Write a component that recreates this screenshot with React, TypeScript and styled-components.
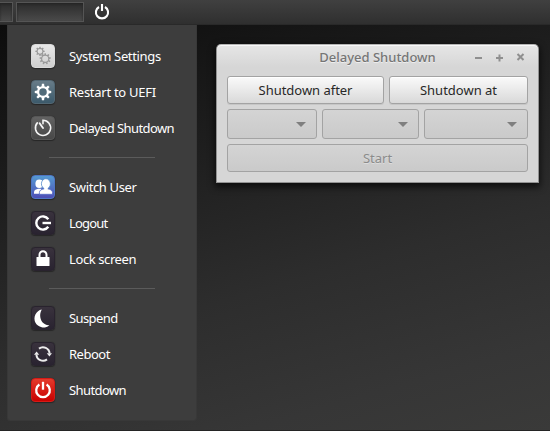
import React from "react";
import styled, { createGlobalStyle } from "styled-components";

const GlobalStyle = createGlobalStyle`
  * { box-sizing: border-box; }
  body { margin: 0; overflow: hidden; background: #222; }
`;

const Desktop = styled.div`
  position: relative;
  width: 550px;
  height: 431px;
  overflow: hidden;
  display: flex;
  flex-direction: column;
  font-family: "Noto Sans", "Open Sans", sans-serif;
  font-size: 13px;
  background: linear-gradient(164deg, #0c0c0c 4%, #161616 20%, #222 42%, #2d2d2d 62%, #363636 85%, #3a3a39 100%);
  box-shadow: inset 0 -1px #242424;
`;

const TaskBar = styled.header`
  height: 25px;
  flex: none;
  display: flex;
  align-items: flex-start;
  padding-top: 2px;
  background: linear-gradient(#404040, #2f2f2f);
  border-bottom: 1px solid #292929;
`;

const TaskSlot = styled.div<{ $width: number; $open?: boolean }>`
  width: ${(p) => p.$width}px;
  height: 20px;
  margin-right: 3px;
  border: 1px solid #555;
  ${(p) => (p.$open ? "border-left: 0;" : "")}
  background: linear-gradient(#2b2b2b, #4a4a4a);
  box-shadow: inset 0 1px 2px #242424;
`;

const TrayIcon = styled.svg`
  display: block;
  margin: 1px 0 0 6px;
`;

const Workspace = styled.main`
  display: flex;
  align-items: flex-start;
  padding-left: 7px;
`;

const Menu = styled.nav`
  width: 190px;
  height: 396px;
  flex: none;
  padding: 13px 0 0 24px;
  background: #3d3d3d;
  border: solid #383838;
  border-width: 0 1px 1px 1px;
  border-radius: 0 0 3px 3px;
`;

const MenuRow = styled.div`
  height: 36px;
  margin-left: -1px;
  display: flex;
  align-items: center;
  gap: 14px;
`;

const Divider = styled.hr`
  width: 106px;
  height: 1px;
  margin: 11px 0 11px 17px;
  border: 0;
  background: #5b5b5b;
`;

const Tile = styled.span<{ $fill: string; $edge: string }>`
  width: 24px;
  height: 24px;
  flex: none;
  border-radius: 4px;
  border: 1px solid ${(p) => p.$edge};
  background: ${(p) => p.$fill};
  box-shadow: 0 0 1px 0 #222, 0 1px 1px rgba(0, 0, 0, 0.35);
  svg { display: block; margin: -1px; }
`;

const Label = styled.span<{ $width: number; $spacing: number }>`
  width: ${(p) => p.$width}px;
  line-height: 18px;
  white-space: nowrap;
  letter-spacing: ${(p) => p.$spacing}px;
  color: #fff;
`;

const Window = styled.section`
  width: 323px;
  height: 139px;
  margin: 19px 0 0 19px;
  padding: 0 10px;
  display: flex;
  flex-direction: column;
  gap: 5px;
  border: 1px solid #929292;
  border-top-color: #b4b4b4;
  border-radius: 5px 5px 0 0;
  background: linear-gradient(#e6e6e6, #d6d6d6 22px);
  box-shadow: inset 0 1px #f8f8f8, 0 3px 7px 1px rgba(0, 0, 0, 0.65);
`;

const TitleBar = styled.div`
  height: 26px;
  display: grid;
  grid-template-columns: 1fr auto;
  align-items: center;
`;

const Title = styled.h1<{ $spacing: number }>`
  margin: 0 0 3px 64px;
  text-align: center;
  font-size: 13px;
  font-weight: 500;
  line-height: 18px;
  letter-spacing: ${(p) => p.$spacing}px;
  color: #757575;
  text-shadow: 0 1px #eee;
`;

const Controls = styled.svg`
  display: block;
  margin-bottom: 2px;
`;

const ButtonRow = styled.div<{ $columns: string }>`
  display: grid;
  grid-template-columns: ${(p) => p.$columns};
  gap: 5px;
`;

const Button = styled.button<{ $spacing: number }>`
  height: 28px;
  padding: 0;
  border: 1px solid #a3a3a3;
  border-radius: 3px;
  background: linear-gradient(#fafafa, #d9d9d9);
  box-shadow: inset 0 1px #fff, 0 1px #c6c6c6;
  font: inherit;
  line-height: 18px;
  letter-spacing: ${(p) => p.$spacing}px;
  color: #282828;
  &:disabled {
    color: #8b8b8b;
    background: linear-gradient(#d4d4d4, #cacaca);
    box-shadow: none;
    text-shadow: 0 1px #ddd;
  }
`;

const Combo = styled.div`
  height: 30px;
  display: flex;
  align-items: center;
  justify-content: flex-end;
  padding-right: 10px;
  border: 1px solid #a3a3a3;
  border-radius: 3px;
  background: linear-gradient(#d4d4d4, #cacaca);
`;

const Arrow = styled.span`
  border: 5px solid transparent;
  border-top-color: #7f7f7f;
  border-bottom: 0;
`;

const gearPath = (cx: number, cy: number, outer: number, inner: number, teeth = 8) => {
  const step = (Math.PI * 2) / teeth;
  const points: string[] = [];
  for (let i = 0; i < teeth; i++) {
    const mid = i * step - Math.PI / 2;
    const corners: [number, number][] = [
      [-0.3, inner],
      [-0.17, outer],
      [0.17, outer],
      [0.3, inner],
    ];
    corners.forEach(([offset, r]) => {
      const a = mid + offset * step;
      points.push(`${(cx + r * Math.cos(a)).toFixed(2)} ${(cy + r * Math.sin(a)).toFixed(2)}`);
    });
  }
  return `M${points.join("L")}Z`;
};

const glyphs: Record<string, React.ReactNode> = {
  settings: (
    <g fill="#999" fillRule="evenodd">
      <path d={`${gearPath(9, 7.3, 4.7, 3.5, 8)}M11.4 7.3a2.4 2.4 0 1 0-4.8 0a2.4 2.4 0 1 0 4.8 0Z`} />
      <path d={`${gearPath(14.2, 14.8, 5.7, 4.2, 9)}M17.2 14.8a3 3 0 1 0-6 0a3 3 0 1 0 6 0Z`} />
    </g>
  ),
  gear: (
    <>
      <path d={gearPath(12, 12, 8.3, 6)} fill="#fff" />
      <circle cx="12" cy="12" r="3.8" fill="#526c7a" />
    </>
  ),
  timer: (
    <g fill="none" stroke="#f4f4f4" strokeLinecap="round">
      <path d="M12 7.8V4.3A7.6 7.6 0 1 1 6.3 6.9" strokeWidth="1.6" />
      <path d="M8.6 7.3L12 12" strokeWidth="1.9" />
    </g>
  ),
  users: (
    <g fill="#fff">
      <ellipse cx="8.3" cy="8.8" rx="3.9" ry="4.3" />
      <path d="M3 18.8v-1.6c0-2.1 2.4-2.9 4.1-3.4h3.2v5z" />
      <path d="M8.4 19.3v-1.7c0-2.4 2-3.2 4.8-3.8h3.5c2.8.6 4.8 1.4 4.8 3.8v1.7z" stroke="#5267c5" strokeWidth=".8" />
      <ellipse cx="14.9" cy="8.8" rx="4.5" ry="5.1" stroke="#528aca" strokeWidth=".8" />
      <path d="M13.2 13h3.5v2.2h-3.5z" />
    </g>
  ),
  logout: (
    <g fill="none" stroke="#fff" strokeWidth="2.4">
      <path d="M17.3 8.2A6.6 6.6 0 1 0 17.3 15.8" />
      <path d="M11.5 12H20" />
    </g>
  ),
  lock: (
    <>
      <path d="M8.5 11V7.8a3.5 3.5 0 0 1 7 0V11" fill="none" stroke="#fff" strokeWidth="2" />
      <rect x="5.5" y="10" width="13" height="9" rx=".6" fill="#fff" />
    </>
  ),
  moon: <path d="M10.8 3.6A9 9 0 1 0 18.4 19.2C10 19.6 7 10 10.8 3.6Z" fill="#fff" />,
  reboot: (
    <>
      <g fill="none" stroke="#ececec" strokeWidth="2">
        <path d="M8 6.6A6.6 6.6 0 0 1 18.6 11.5" />
        <path d="M16 17.4A6.6 6.6 0 0 1 5.4 12.5" />
      </g>
      <path d="M15.8 11.2h5.2l-2.6 3.4zM3 12.8h5.2L5.6 9.4z" fill="#ececec" />
    </>
  ),
  power: (
    <g fill="none" stroke="#fff" strokeWidth="2.3">
      <path d="M8.4 6.6A6.8 6.8 0 1 0 15.6 6.6" />
      <path d="M12 3.8v7.9" />
    </g>
  ),
};

const dark = { fill: "linear-gradient(#39323d, #292330)", edge: "#29232e" };

type Item = { label: string; glyph: string; width: number; spacing: number; fill: string; edge: string };

const groups: Item[][] = [
  [
    { label: "System Settings", glyph: "settings", width: 92, spacing: -0.35, fill: "linear-gradient(#e8e8e8, #cfcfcf)", edge: "#d9d9d9" },
    { label: "Restart to UEFI", glyph: "gear", width: 88, spacing: -0.27, fill: "linear-gradient(#687c88, #3c5a6b)", edge: "#526773" },
    { label: "Delayed Shutdown", glyph: "timer", width: 106, spacing: -0.6, fill: "linear-gradient(#626262, #484848)", edge: "#575757" },
  ],
  [
    { label: "Switch User", glyph: "users", width: 68, spacing: -0.36, fill: "linear-gradient(#559ad2, #4e4eb6)", edge: "#4e75c4" },
    { label: "Logout", glyph: "logout", width: 39, spacing: -0.8, ...dark },
    { label: "Lock screen", glyph: "lock", width: 67, spacing: -0.4, ...dark },
  ],
  [
    { label: "Suspend", glyph: "moon", width: 49, spacing: -0.6, ...dark },
    { label: "Reboot", glyph: "reboot", width: 41, spacing: -0.5, ...dark },
    { label: "Shutdown", glyph: "power", width: 57, spacing: -0.6, fill: "linear-gradient(#e43b2c, #c90000)", edge: "#d51b16" },
  ],
];

export default function App() {
  return (
    <>
      <GlobalStyle />
      <Desktop>
        <TaskBar>
          <TaskSlot $width={13} $open />
          <TaskSlot $width={68} />
          <TrayIcon width="18" height="18" viewBox="0 0 18 18">
            <g fill="none" stroke="#fff" strokeWidth="2.1">
              <path d="M6 4A6.1 6.1 0 1 0 12 4" />
              <path d="M9 1v7" />
            </g>
          </TrayIcon>
        </TaskBar>
        <Workspace>
          <Menu>
            {groups.map((items, index) => (
              <React.Fragment key={index}>
                {index > 0 && <Divider />}
                {items.map((item) => (
                  <MenuRow key={item.label}>
                    <Tile $fill={item.fill} $edge={item.edge}>
                      <svg width="24" height="24" viewBox="0 0 24 24">{glyphs[item.glyph]}</svg>
                    </Tile>
                    <Label $width={item.width} $spacing={item.spacing}>{item.label}</Label>
                  </MenuRow>
                ))}
              </React.Fragment>
            ))}
          </Menu>
          <Window>
            <TitleBar>
              <Title $spacing={0}>Delayed Shutdown</Title>
              <Controls width="64" height="14" viewBox="0 0 64 14" fill="none" stroke="#8f8f8f" strokeWidth="2">
                <path d="M11 8h7M32 8h7M35.5 4.5v7" />
                <path d="M53.5 4l6 6M59.5 4l-6 6" />
              </Controls>
            </TitleBar>
            <ButtonRow $columns="157px 139px">
              <Button $spacing={-0.03}>Shutdown after</Button>
              <Button $spacing={0}>Shutdown at</Button>
            </ButtonRow>
            <ButtonRow $columns="90px 97px 104px">
              <Combo><Arrow /></Combo>
              <Combo><Arrow /></Combo>
              <Combo><Arrow /></Combo>
            </ButtonRow>
            <ButtonRow $columns="301px">
              <Button $spacing={0} disabled>Start</Button>
            </ButtonRow>
          </Window>
        </Workspace>
      </Desktop>
    </>
  );
}
